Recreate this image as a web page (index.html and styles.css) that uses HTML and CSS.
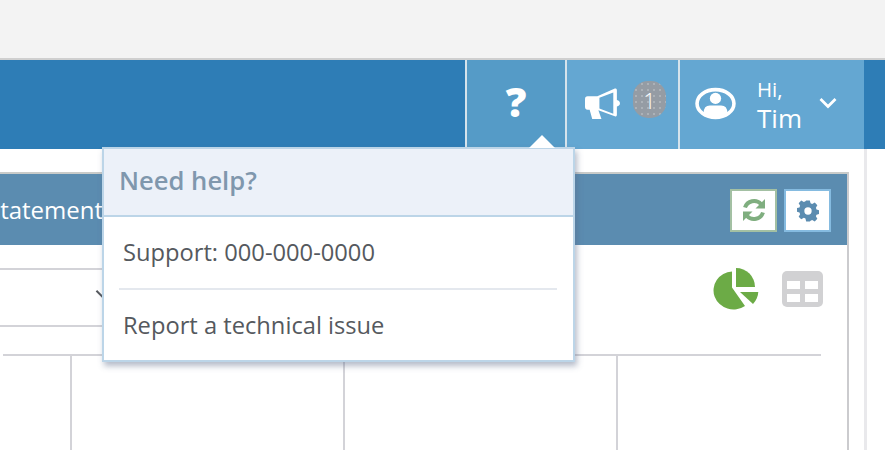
FILE: index.html
```html
<!DOCTYPE html>
<html lang="en">
<head>
<meta charset="utf-8">
<title>Need help</title>
<link rel="stylesheet" href="styles.css">
</head>
<body>
<div class="topbar"></div>
<nav class="nav">
  <div class="nav-item nav-help"><span class="question">?</span></div>
  <div class="nav-item nav-news">
    <svg class="mega" viewBox="0 0 36 32"><path d="M1 11.500q0-2.500 2.500-2.500H13L30 1.500q2-.8 2 1.500v9.500q3 .8 3 3.200t-3 3.200V27q0 2.300-2 1.500L14 22.500l3 8.500H8l-2.500-9H3.500Q1 22 1 19.500zM15 10.300v10.600l13.500 5V5.300z"/></svg>
    <span class="badge">1</span>
  </div>
  <div class="nav-item nav-user">
    <svg class="avatar" viewBox="0 0 40 32"><ellipse class="avatar-ring" cx="20" cy="16" rx="18" ry="13.500"/><circle cx="20" cy="11" r="5.500"/><path d="M8.500 25q0-7 6-7h11q6 0 6 7-5 3.500-11.500 3.500T8.500 25z"/></svg>
    <div class="greet"><span class="hi">Hi,</span><span class="name">Tim</span></div>
    <svg class="chev" viewBox="0 0 18 12"><path d="M1.500 2 9 9.500 16.500 2"/></svg>
  </div>
</nav>
<main class="main">
  <section class="card">
    <header class="card-head">
      <h2 class="card-title">Statement</h2>
      <div class="tools">
        <button class="tool tool-green" type="button">
          <svg viewBox="0 0 26 26"><path class="sync" d="M4 10.500A9.500 9.500 0 0 1 20 7"/><path class="sync" d="M22 15.500A9.500 9.500 0 0 1 6 19"/><path class="sync-head" d="M24 2v9.500h-9.500z"/><path class="sync-head" d="M2 24v-9.500h9.500z"/></svg>
        </button>
        <button class="tool tool-blue" type="button">
          <svg viewBox="0 0 24 24"><path fill-rule="evenodd" d="M10 1h4l.8 3.200 1.700.8 2.900-1.600 2.800 2.900-1.600 2.800.7 1.800 3 .8v4l-3 .8-.7 1.800 1.600 2.800-2.800 2.800-2.900-1.600-1.700.8L14 24h-4l-.8-3.200-1.700-.8-2.900 1.600-2.800-2.800 1.600-2.800-.7-1.800-3-.8v-4l3-.8.700-1.800-1.600-2.800 2.800-2.900 2.900 1.600 1.700-.8zM12 8.500a4 4 0 1 0 0 8 4 4 0 0 0 0-8z"/></svg>
        </button>
      </div>
    </header>
    <div class="card-body">
      <div class="filter-row">
        <div class="select"><span class="select-arrow"></span></div>
        <div class="views">
          <svg class="pie" viewBox="0 0 47 42"><path d="M20 3.500V19.500L33 38A20 19 0 1 1 20 3.500z"/><path d="M24 0A19 19 0 0 1 43 19H24z"/><path d="M28 24H46.300A19 19 0 0 1 41 36z"/></svg>
          <div class="grid-icon"><span></span><span></span><span></span><span></span></div>
        </div>
      </div>
      <div class="table">
        <div class="col"></div>
        <div class="col"></div>
        <div class="col"></div>
        <div class="col"></div>
      </div>
    </div>
  </section>
  <aside class="side"></aside>
</main>
<div class="popup">
  <span class="popup-arrow"></span>
  <div class="popup-head">Need help?</div>
  <div class="popup-body">
    <div class="popup-row">Support: 000-000-0000</div>
    <div class="popup-row">Report a technical issue</div>
  </div>
</div>
</body>
</html>
```
FILE: styles.css
```css
* { box-sizing: border-box; }
html, body { margin: 0; height: 100%; }
body {
  position: relative;
  width: 885px;
  height: 450px;
  overflow: hidden;
  background: #fff;
  font-family: "Open Sans", sans-serif;
  color: #55595e;
}
.topbar { height: 60px; background: #f3f3f3; border-bottom: 2px solid #cfcfcf; }
.nav {
  display: flex;
  justify-content: flex-end;
  height: 89px;
  padding-right: 21px;
  background: #2e7db6;
  color: #fff;
}
.nav-item {
  display: flex;
  align-items: center;
  height: 100%;
  background: #64a7d2;
  border-left: 2px solid #d5e3ec;
}
.nav-help { width: 100px; justify-content: center; background: #559bc7; }
.question { font-size: 41px; font-weight: 800; line-height: 1; margin-top: -7px; }
.nav-news { width: 113px; padding-left: 17px; }
.mega { width: 37px; height: 33px; fill: #fff; margin-top: -3px; }
.badge {
  display: flex;
  align-items: center;
  justify-content: center;
  width: 33px;
  height: 37px;
  margin: -10px 0 0 12px;
  border-radius: 15px;
  background-color: #959ca4;
  background-image: radial-gradient(circle, rgba(255, 255, 255, .3) .6px, transparent 1px);
  background-size: 6px 6px;
  font-size: 22px;
  font-weight: 300;
  line-height: 1;
}
.nav-user { width: 186px; padding-left: 15px; }
.avatar { width: 41px; height: 33px; fill: #fff; margin-top: -3px; }
.avatar-ring { fill: none; stroke: #fff; stroke-width: 3.500; }
.greet { display: flex; flex-direction: column; margin: -2px 0 0 21px; width: 62px; }
.hi { font-size: 20.500px; line-height: 28px; }
.name { font-size: 26px; line-height: 30px; }
.chev { width: 18px; height: 12px; fill: none; stroke: #fff; stroke-width: 2.800; margin: -3px 0 0 0; }

.main { display: flex; height: 301px; }
.card {
  display: flex;
  flex-direction: column;
  width: 849px;
  margin-top: 23px;
  border-top: 2px solid #c9cbc9;
  border-right: 2px solid #cbcbce;
}
.card-head {
  display: flex;
  align-items: center;
  justify-content: space-between;
  height: 71px;
  padding-right: 16px;
  background: #5b8cb0;
  color: #fff;
}
.card-title { margin: 0 0 0 -13px; font-size: 24px; font-weight: 400; }
.tools { display: flex; gap: 7px; margin-top: 1px; }
.tool { display: flex; align-items: center; justify-content: center; width: 47px; height: 43px; padding: 0; background: #fff; }
.tool-green svg { width: 26px; height: 26px; }
.tool-blue svg { width: 22px; height: 23px; fill: #5b8cb0; }
.tool-green { border: 2px solid #a3c0a3; }
.tool-blue { border: 2px solid #85bbe0; }
.sync { fill: none; stroke: #7fae7f; stroke-width: 4; }
.sync-head { fill: #7fae7f; }
.card-body { display: flex; flex: 1; flex-direction: column; }
.filter-row { display: flex; justify-content: space-between; height: 109px; padding-top: 23px; }
.select {
  position: relative;
  width: 300px;
  height: 59px;
  border-top: 2px solid #d3d3d8;
  border-bottom: 2px solid #d3d3d8;
}
.select-arrow {
  position: absolute;
  left: 98px;
  top: 16px;
  width: 11px;
  height: 11px;
  border-right: 2px solid #55595e;
  border-bottom: 2px solid #55595e;
  transform: rotate(45deg);
}
.views { display: flex; align-items: flex-start; gap: 23px; padding-right: 24px; }
.pie { width: 47px; height: 42px; fill: #6cab46; }
.grid-icon {
  display: grid;
  grid-template: 1fr 1fr / 1fr 1fr;
  gap: 5px;
  width: 41px;
  height: 36px;
  margin-top: 3px;
  padding: 10px 5px 5px;
  border-radius: 5px;
  background: #d1d1d3;
}
.grid-icon span { background: #fff; }
.table {
  display: grid;
  flex: 1;
  grid-template-columns: 69px 273px 273px 203px;
  width: 818px;
  margin-left: 3px;
  border-top: 2px solid #d3d3d8;
}
.col { border-right: 2px solid #d3d3d8; }
.col:last-child { border-right: 0; }
.side { width: 16px; margin-left: 15px; border-left: 3px solid #e9e9ec; }

.popup {
  position: absolute;
  left: 102px;
  top: 147px;
  width: 473px;
  height: 215px;
  background: #fff;
  border: 2px solid #bcd5e8;
  box-shadow: 2px 4px 6px rgba(90, 105, 135, .45);
}
.popup-arrow {
  position: absolute;
  right: 18px;
  top: -14px;
  width: 0;
  height: 0;
  border-left: 13px solid transparent;
  border-right: 13px solid transparent;
  border-bottom: 13px solid #fff;
}
.popup-head {
  height: 68px;
  padding: 14px 0 0 15px;
  background: #ecf1f9;
  border-bottom: 2px solid #bcd5e8;
  color: #7f97ad;
  font-size: 25.600px;
  font-weight: 600;
  line-height: 36px;
}
.popup-body { padding: 0 16px 0 15px; }
.popup-row { height: 71px; padding: 19px 0 0 4px; font-size: 23.700px; line-height: 32px; }
.popup-row + .popup-row { border-top: 2px solid #e4e8ee; padding-top: 19px; }
```
